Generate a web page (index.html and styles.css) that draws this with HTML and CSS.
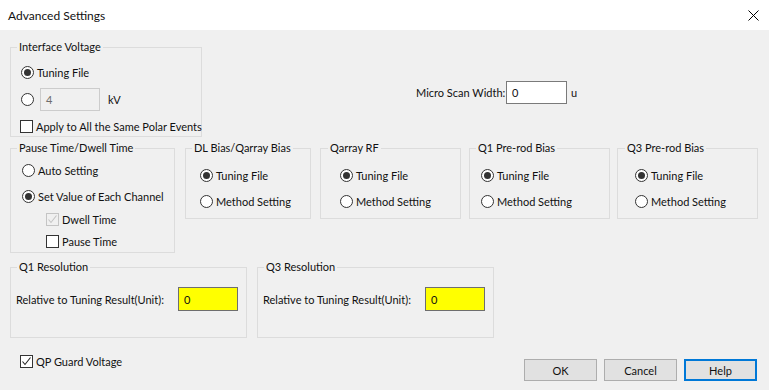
FILE: index.html
```html
<!DOCTYPE html>
<html lang="en">
<head>
  <meta charset="UTF-8">
  <title>Advanced Settings</title>
  <link rel="stylesheet" href="styles.css">
</head>
<body>

  <div class="titlebar">
    <span class="title">Advanced Settings</span>
    <svg class="close" width="11" height="11" viewBox="0 0 11 11">
      <path d="M0.5 0.5 L10.5 10.5 M10.5 0.5 L0.5 10.5" stroke="#000" stroke-width="1" fill="none" />
    </svg>
  </div>

  <div class="dialog">

    <div class="row row-top">
      <div class="group g-voltage">
        <span class="legend">Interface Voltage</span>
        <div class="opt"><span class="radio on"></span><span class="lbl">Tuning File</span></div>
        <div class="opt"><span class="radio"></span><span class="field off">4</span><span class="unit">kV</span></div>
        <div class="opt"><span class="check"></span><span class="lbl">Apply to All the Same Polar Events</span></div>
      </div>
      <div class="micro">
        <span class="micro-lbl">Micro Scan Width:</span>
        <span class="field micro-field">0</span>
        <span class="micro-unit">u</span>
      </div>
    </div>

    <div class="row row-mid">
      <div class="group g-pause">
        <span class="legend">Pause Time/Dwell Time</span>
        <div class="opt"><span class="radio"></span><span class="lbl">Auto Setting</span></div>
        <div class="opt"><span class="radio on"></span><span class="lbl">Set Value of Each Channel</span></div>
        <div class="opt sub dwell">
          <span class="check checked disabled">
            <svg width="11" height="11" viewBox="0 0 11 11"><path d="M1.5 5.5 L4 8.5 L9.5 1.5" stroke="#c4c4c4" stroke-width="1.1" fill="none" /></svg>
          </span>
          <span class="lbl">Dwell Time</span>
        </div>
        <div class="opt sub pause"><span class="check"></span><span class="lbl">Pause Time</span></div>
      </div>

      <div class="group g-small g-dl">
        <span class="legend">DL Bias/Qarray Bias</span>
        <div class="opt"><span class="radio on"></span><span class="lbl">Tuning File</span></div>
        <div class="opt"><span class="radio"></span><span class="lbl">Method Setting</span></div>
      </div>

      <div class="group g-small g-rf">
        <span class="legend">Qarray RF</span>
        <div class="opt"><span class="radio on"></span><span class="lbl">Tuning File</span></div>
        <div class="opt"><span class="radio"></span><span class="lbl">Method Setting</span></div>
      </div>

      <div class="group g-small g-q1">
        <span class="legend">Q1 Pre-rod Bias</span>
        <div class="opt"><span class="radio on"></span><span class="lbl">Tuning File</span></div>
        <div class="opt"><span class="radio"></span><span class="lbl">Method Setting</span></div>
      </div>

      <div class="group g-small g-q3">
        <span class="legend">Q3 Pre-rod Bias</span>
        <div class="opt"><span class="radio on"></span><span class="lbl">Tuning File</span></div>
        <div class="opt"><span class="radio"></span><span class="lbl">Method Setting</span></div>
      </div>
    </div>

    <div class="row row-res">
      <div class="group g-res">
        <span class="legend">Q1 Resolution</span>
        <div class="res-line">
          <span class="res-lbl">Relative to Tuning Result(Unit):</span>
          <span class="field yellow">0</span>
        </div>
      </div>
      <div class="group g-res g-res3">
        <span class="legend">Q3 Resolution</span>
        <div class="res-line">
          <span class="res-lbl">Relative to Tuning Result(Unit):</span>
          <span class="field yellow">0</span>
        </div>
      </div>
    </div>

    <div class="row row-bottom">
      <div class="opt qp">
        <span class="check checked">
          <svg width="11" height="11" viewBox="0 0 11 11"><path d="M1.5 5.5 L4 8.5 L9.5 1.5" stroke="#222" stroke-width="1.1" fill="none" /></svg>
        </span>
        <span class="lbl">QP Guard Voltage</span>
      </div>
      <div class="buttons">
        <button type="button" class="btn">OK</button>
        <button type="button" class="btn">Cancel</button>
        <button type="button" class="btn btn-default">Help</button>
      </div>
    </div>

  </div>

</body>
</html>
```

FILE: styles.css
```css
* {
  box-sizing: border-box;
}

body {
  margin: 0;
  width: 769px;
  height: 390px;
  overflow: hidden;
  font-family: Lato, "Segoe UI", sans-serif;
  font-size: 11px;
  color: #111;
  background-color: #f0f0f0;
}

/* title bar */
.titlebar {
  height: 30px;
  background-color: #fff;
  display: flex;
  align-items: center;
  justify-content: space-between;
  padding: 0 10px 0 8px;
}
.title {
  font-size: 12px;
}
.close {
  display: block;
}

.dialog {
  padding: 17px 0 0 10px;
}

.row {
  display: flex;
}

/* group boxes */
.group {
  position: relative;
  border: 1px solid #dcdcdc;
}
.legend {
  position: absolute;
  top: -9px;
  left: 6px;
  padding: 0 2px;
  line-height: 16px;
  background-color: #f0f0f0;
  white-space: nowrap;
}

.opt {
  display: flex;
  align-items: center;
  height: 26px;
  white-space: nowrap;
}
.lbl {
  margin-left: 3px;
}

.radio {
  width: 13px;
  height: 13px;
  flex: none;
  border: 1px solid #333;
  border-radius: 50%;
  background-color: #fff;
  display: flex;
  align-items: center;
  justify-content: center;
}
.radio.on::after {
  content: "";
  width: 7px;
  height: 7px;
  border-radius: 50%;
  background-color: #333;
}

.check {
  width: 13px;
  height: 13px;
  flex: none;
  border: 1px solid #333;
  background-color: #fff;
  display: flex;
  align-items: center;
  justify-content: center;
}
.check svg {
  display: block;
}
.check.disabled {
  border-color: #c4c4c4;
  background-color: #f0f0f0;
}

.field {
  display: flex;
  align-items: center;
  height: 23px;
  padding-left: 5px;
  border: 1px solid #7a7a7a;
  background-color: #fff;
}
.field.off {
  width: 60px;
  margin-left: 6px;
  border-color: #cccccc;
  background-color: #f0f0f0;
  color: #6d6d6d;
}
.unit {
  margin-left: 8px;
}

/* interface voltage */
.row-top {
  align-items: center;
}
.g-voltage {
  width: 192px;
  height: 90px;
  padding: 11px 0 0 10px;
}
.g-voltage .opt {
  height: 27px;
}
.g-voltage .opt .check {
  margin-left: -1px;
}

.micro {
  display: flex;
  align-items: center;
  margin-left: 214px;
}
.micro-lbl {
  width: 90px;
  white-space: nowrap;
}
.micro-field {
  width: 61px;
}
.micro-unit {
  margin-left: 4px;
}

/* middle row */
.row-mid {
  margin-top: 11px;
  align-items: flex-start;
}
.g-pause {
  width: 165px;
  height: 105px;
  padding: 8px 0 0 11px;
}
.sub {
  padding-left: 24px;
}
.dwell {
  height: 20px;
}
.pause {
  height: 24px;
}

.g-small {
  width: 141px;
  height: 71px;
  padding-top: 13px;
}
.g-dl {
  width: 126px;
  margin-left: 10px;
  padding-left: 14px;
}
.g-rf {
  margin-left: 9px;
  padding-left: 19px;
}
.g-rf .legend {
  left: 7px;
}
.g-q1 {
  margin-left: 8px;
  padding-left: 11px;
}
.g-q3 {
  margin-left: 7px;
  padding-left: 17px;
}
.g-q3 .legend {
  left: 7px;
}

/* resolution */
.row-res {
  margin-top: 14px;
}
.g-res {
  width: 237px;
  height: 71px;
  padding: 19px 0 0 5px;
}
.g-res3 {
  margin-left: 10px;
}
.res-line {
  display: flex;
  align-items: center;
}
.res-lbl {
  width: 162px;
  white-space: nowrap;
}
.field.yellow {
  width: 60px;
  height: 24px;
  background-color: #ffff00;
  border-color: #6e6e6e;
}

/* bottom */
.row-bottom {
  margin-top: 17px;
  align-items: flex-start;
}
.qp {
  height: 13px;
  margin-left: 10px;
}
.buttons {
  display: flex;
  gap: 7px;
  margin: 4px 12px 0 auto;
}
.btn {
  width: 73px;
  height: 22px;
  padding: 0;
  font-family: inherit;
  font-size: 11px;
  color: #111;
  background-color: #e1e1e1;
  border: 1px solid #adadad;
}
.btn-default {
  border: 2px solid #0078d7;
}
```
